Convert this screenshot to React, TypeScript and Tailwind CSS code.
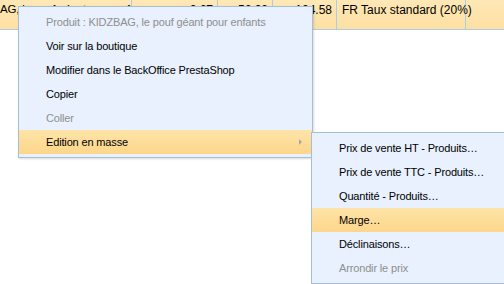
import React from "react";

const mainItems = [
  { label: "Produit : KIDZBAG, le pouf géant pour enfants", disabled: true },
  { label: "Voir sur la boutique" },
  { label: "Modifier dans le BackOffice PrestaShop" },
  { label: "Copier" },
  { label: "Coller", disabled: true },
  { label: "Edition en masse", active: true, sub: true },
];

const subItems = [
  { label: "Prix de vente HT - Produits…" },
  { label: "Prix de vente TTC - Produits…" },
  { label: "Quantité - Produits…" },
  { label: "Marge…", active: true },
  { label: "Déclinaisons…" },
  { label: "Arrondir le prix", disabled: true },
];

function MenuItem({ label, disabled, active, sub }: any) {
  return (
    <div
      className={`relative flex h-[24px] items-center pl-[27px] whitespace-nowrap ${
        active ? "bg-gradient-to-b from-[#fee4a8] to-[#fdd68a]" : ""
      } ${disabled ? "text-[#8f8f8f]" : "text-black"}`}
    >
      {label}
      {sub && (
        <span className="absolute right-[10px] top-[9px] h-0 w-0 border-y-[3px] border-l-[3px] border-y-transparent border-l-[#a8a8a8]" />
      )}
    </div>
  );
}

export default function App() {
  return (
    <div className="relative h-[284px] w-[504px] overflow-hidden bg-white text-[11px] font-['Liberation_Sans',Arial,sans-serif]">
      {/* grid row behind the menu */}
      <div className="flex h-[30px] border-b border-[#a9cde8] bg-gradient-to-b from-[#fee8b6] to-[#fde0a2] text-[12px] text-black">
        <div className="w-[132px] shrink-0 overflow-hidden whitespace-nowrap border-r border-[#a9cde8] pt-[1px] text-[11.5px] tracking-[-0.2px]">
          AG, le pouf géant pour enfa
        </div>
        <div className="w-[86px] shrink-0 border-r border-[#a9cde8] pr-[4px] pt-[1px] text-right">2.67</div>
        <div className="w-[55px] shrink-0 border-r border-[#a9cde8] pr-[4px] pt-[1px] text-right">56.00</div>
        <div className="w-[64px] shrink-0 border-r border-[#a9cde8] pr-[4px] pt-[1px] text-right">124.58</div>
        <div className="w-[129px] shrink-0 border-r border-[#a9cde8] pl-[5px] pt-[1px] whitespace-nowrap">FR Taux standard (20%)</div>
        <div className="flex-1" />
      </div>

      {/* context menu */}
      <div className="absolute left-[18px] top-[6px] w-[295px] border border-[#a7bed8] bg-[#e8f1fd] py-[3px] shadow-[1px_1px_2px_rgba(0,0,0,0.15)] tracking-[-0.15px]">
        {mainItems.map((it) => (
          <MenuItem key={it.label} {...it} />
        ))}
      </div>

      {/* submenu */}
      <div className="absolute left-[311px] top-[132px] w-[200px] border border-[#a7bed8] bg-[#e8f1fd] py-[3px] tracking-[-0.15px]">
        {subItems.map((it) => (
          <MenuItem key={it.label} {...it} />
        ))}
      </div>
    </div>
  );
}
